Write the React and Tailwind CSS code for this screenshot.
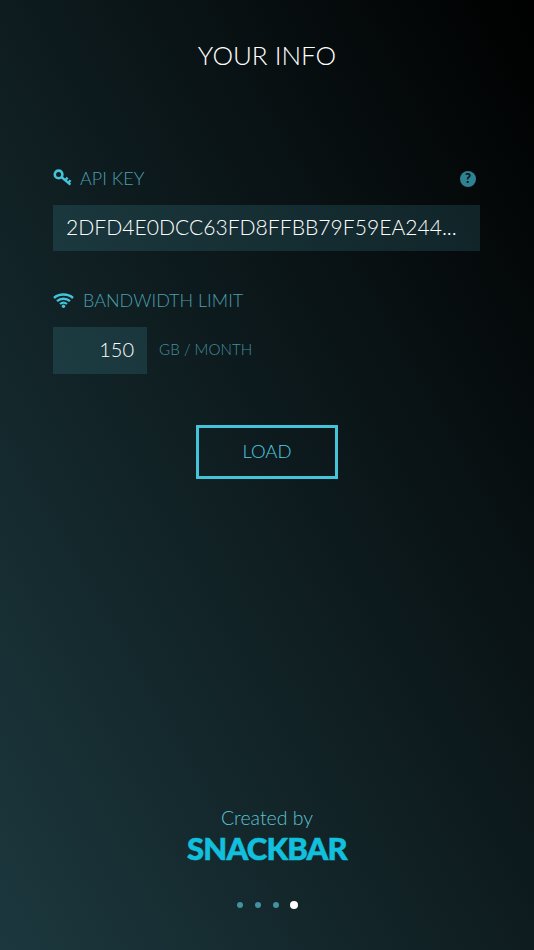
const font = "font-['Lato',sans-serif]";

function KeyIcon() {
  return (
    <svg width="19" height="18" viewBox="0 0 19 18" fill="none" className="text-[#45c3d8]">
      <circle cx="5.6" cy="5.4" r="3.8" stroke="currentColor" strokeWidth="2.6" />
      <path d="M8.4 8 L17.4 15.6 M12.2 11.2 L14.6 8.6 M15.2 13.8 L17.6 11.2" stroke="currentColor" strokeWidth="2.4" />
    </svg>
  );
}

function WifiIcon() {
  return (
    <svg width="21" height="15" viewBox="0 0 21 15" fill="none" className="text-[#45c3d8]">
      <path d="M1 5 C6 0.4 15 0.4 20 5" stroke="currentColor" strokeWidth="2.4" />
      <path d="M4 8.2 C7.6 5 13.4 5 17 8.2" stroke="currentColor" strokeWidth="2.4" />
      <path d="M7 11 C9 9.4 12 9.4 14 11" stroke="currentColor" strokeWidth="2.2" />
      <circle cx="10.5" cy="13.2" r="1.7" fill="currentColor" />
    </svg>
  );
}

export default function App() {
  const dots = [0, 1, 2, 3];

  return (
    <div className={`${font} h-[950px] w-[534px] overflow-hidden flex flex-col items-center bg-[linear-gradient(to_top_right,#1c383e,#000000)] font-light`}>
      <h1 className="mt-[38px] text-[26px] leading-[34px] font-light text-white">YOUR INFO</h1>

      <div className="mt-[90px] w-[427px] self-start ml-[53px]">
        <div className="flex items-center justify-between h-[32px]">
          <div className="flex items-center gap-[8px]">
            <KeyIcon />
            <span className="text-[18px] text-[#4a9fae]">API KEY</span>
          </div>
          <div className="mr-[4px] mt-[1px] w-[16px] h-[16px] rounded-full bg-[#2f8292] flex items-center justify-center text-[13px] font-black text-[#071114]">?</div>
        </div>
        <div className="mt-[11px] h-[46px] bg-[#5fd0e0]/[0.14] flex items-center pl-[13px] pb-[2px] text-[21.1px] text-white whitespace-nowrap">
          2DFD4E0DCC63FD8FFBB79F59EA244...
        </div>

        <div className="mt-[33px] flex items-center gap-[9px] h-[32px]">
          <WifiIcon />
          <span className="text-[18px] text-[#4a9fae]">BANDWIDTH LIMIT</span>
        </div>
        <div className="mt-[11px] flex items-center gap-[12px]">
          <div className="w-[94px] h-[47px] bg-[#5fd0e0]/[0.14] flex items-center justify-end pr-[13px] pb-[3px] text-[20px] text-white">150</div>
          <span className="text-[15.2px] pb-[3px] text-[#428f9e]">GB / MONTH</span>
        </div>
      </div>

      <button className="mt-[51px] w-[142px] h-[54px] border-[3px] border-[#45c3d8] text-[18.5px] font-light text-[#52cde0]">
        LOAD
      </button>

      <div className="mt-auto mb-[-2px] text-[19.5px] leading-[24px] text-[#5cc2d1]">Created by</div>
      <div className="mt-[3px] text-[31px] leading-[34px] font-black text-[#12bfdc] tracking-[-0.8px] [-webkit-text-stroke:0.6px_#12bfdc]">SNACKBAR</div>

      <div className="mt-[36px] mb-[41px] flex items-center">
        {dots.map((d) => (
          <span key={d} className="w-[18px] flex justify-center">
            <span className={d === 3 ? 'w-[8px] h-[8px] rounded-full bg-white' : 'w-[6px] h-[6px] rounded-full bg-[#44929f]'} />
          </span>
        ))}
      </div>
    </div>
  );
}
